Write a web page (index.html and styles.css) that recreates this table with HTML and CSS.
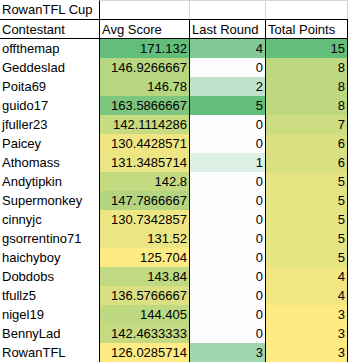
FILE: index.html
```html
<!DOCTYPE html>
<html>
<head>
<meta charset="utf-8">
<link rel="stylesheet" href="styles.css">
</head>
<body>
<div class="sheet">
  <div class="cell title first">RowanTFL Cup</div>
  <div class="cell title"></div>
  <div class="cell title"></div>
  <div class="cell title"></div>

  <div class="cell head">Contestant</div>
  <div class="cell head">Avg Score</div>
  <div class="cell head">Last Round</div>
  <div class="cell head">Total Points</div>

  <div class="cell name">offthemap</div>
  <div class="cell num" style="background:#63BE7B">171.132</div>
  <div class="cell num" style="background:#82CA95">4</div>
  <div class="cell num" style="background:#63BE7B">15</div>

  <div class="cell name">Geddeslad</div>
  <div class="cell num" style="background:#B6D680">146.9266667</div>
  <div class="cell num" style="background:#FCFCFF">0</div>
  <div class="cell num" style="background:#BED880">8</div>

  <div class="cell name">Poita69</div>
  <div class="cell num" style="background:#B7D680">146.78</div>
  <div class="cell num" style="background:#BFE3CA">2</div>
  <div class="cell num" style="background:#BED880">8</div>

  <div class="cell name">guido17</div>
  <div class="cell num" style="background:#7DC67D">163.5866667</div>
  <div class="cell num" style="background:#63BE7B">5</div>
  <div class="cell num" style="background:#BED880">8</div>

  <div class="cell name">jfuller23</div>
  <div class="cell num" style="background:#C7DB81">142.1114286</div>
  <div class="cell num" style="background:#FCFCFF">0</div>
  <div class="cell num" style="background:#CBDC81">7</div>

  <div class="cell name">Paicey</div>
  <div class="cell num" style="background:#EFE683">130.4428571</div>
  <div class="cell num" style="background:#FCFCFF">0</div>
  <div class="cell num" style="background:#D8E082">6</div>

  <div class="cell name">Athomass</div>
  <div class="cell num" style="background:#ECE583">131.3485714</div>
  <div class="cell num" style="background:#DDF0E5">1</div>
  <div class="cell num" style="background:#D8E082">6</div>

  <div class="cell name">Andytipkin</div>
  <div class="cell num" style="background:#C4DA81">142.8</div>
  <div class="cell num" style="background:#FCFCFF">0</div>
  <div class="cell num" style="background:#E5E483">5</div>

  <div class="cell name">Supermonkey</div>
  <div class="cell num" style="background:#B3D580">147.7866667</div>
  <div class="cell num" style="background:#FCFCFF">0</div>
  <div class="cell num" style="background:#E5E483">5</div>

  <div class="cell name">cinnyjc</div>
  <div class="cell num" style="background:#EEE683">130.7342857</div>
  <div class="cell num" style="background:#FCFCFF">0</div>
  <div class="cell num" style="background:#E5E483">5</div>

  <div class="cell name">gsorrentino71</div>
  <div class="cell num" style="background:#EBE583">131.52</div>
  <div class="cell num" style="background:#FCFCFF">0</div>
  <div class="cell num" style="background:#E5E483">5</div>

  <div class="cell name">haichyboy</div>
  <div class="cell num" style="background:#FFEB84">125.704</div>
  <div class="cell num" style="background:#FCFCFF">0</div>
  <div class="cell num" style="background:#E5E483">5</div>

  <div class="cell name">Dobdobs</div>
  <div class="cell num" style="background:#C1D980">143.84</div>
  <div class="cell num" style="background:#FCFCFF">0</div>
  <div class="cell num" style="background:#F2E783">4</div>

  <div class="cell name">tfullz5</div>
  <div class="cell num" style="background:#DAE082">136.5766667</div>
  <div class="cell num" style="background:#FCFCFF">0</div>
  <div class="cell num" style="background:#F2E783">4</div>

  <div class="cell name">nigel19</div>
  <div class="cell num" style="background:#BFD980">144.405</div>
  <div class="cell num" style="background:#FCFCFF">0</div>
  <div class="cell num" style="background:#FFEB84">3</div>

  <div class="cell name">BennyLad</div>
  <div class="cell num" style="background:#C5DA81">142.4633333</div>
  <div class="cell num" style="background:#FCFCFF">0</div>
  <div class="cell num" style="background:#FFEB84">3</div>

  <div class="cell name">RowanTFL</div>
  <div class="cell num" style="background:#FEEB84">126.0285714</div>
  <div class="cell num" style="background:#A0D7B0">3</div>
  <div class="cell num" style="background:#FFEB84">3</div>
</div>
</body>
</html>
```
FILE: styles.css
```css
html, body {
  margin: 0;
  padding: 0;
  background: #ffffff;
}

.sheet {
  display: grid;
  grid-template-columns: 100px 90px 76px 82px;
  font-family: "Liberation Sans", Arial, sans-serif;
  font-size: 13px;
  color: #000000;
}

.cell {
  box-sizing: border-box;
  border-right: 1px solid #000000;
  white-space: nowrap;
  overflow: hidden;
}

.title {
  height: 19px;
  line-height: 18px;
  border-top: 1px solid #d4d4d4;
  border-right-color: #d4d4d4;
  padding-left: 2px;
}

.title.first {
  border-top-color: #ffffff;
  border-right-color: #000000;
}

.head {
  height: 20px;
  line-height: 17px;
  padding-top: 1px;
  padding-left: 2px;
  border-top: 1px solid #000000;
  border-bottom: 1px solid #000000;
}

.name,
.num {
  height: 19px;
  line-height: 18px;
  padding-top: 1px;
}

.name {
  padding-left: 2px;
  background: #ffffff;
}

.num {
  text-align: right;
  padding-right: 2px;
}
```
